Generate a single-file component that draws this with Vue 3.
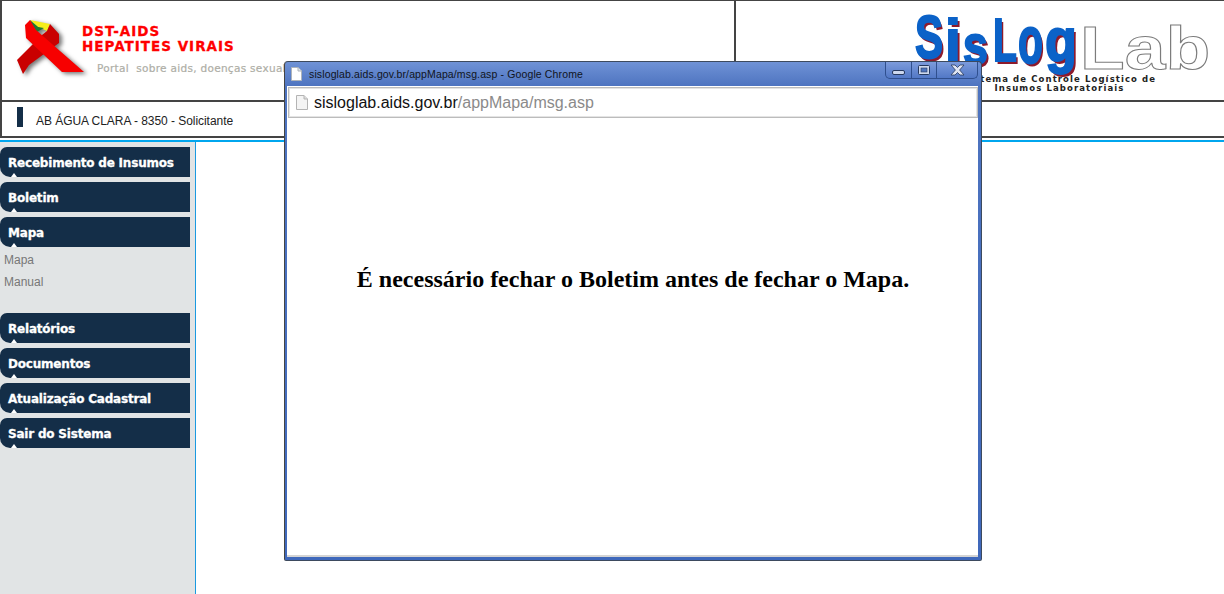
<template>
  <div class="page">
    <header class="top">
      <div class="brand">
        <svg class="ribbon" width="75" height="62" viewBox="15 18 75 62">
          <path d="M30 20 L50 24 L47 31 L38 27 Z" fill="#f6ee1a" />
          <path d="M30 20 L38 27 L44 28 L37 32 L33 30 Z" fill="#1c7a30" />
          <path d="M50 24 L59 34 L59 43 L29 65 L23 74 L17 60 L42 35 L47 31 Z" fill="#c90000" />
          <path d="M25 25 L30 20 L36 30 L84 72 L62 72 L26 38 Z" fill="#f70000" />
        </svg>
        <div class="brand-text">
          <div class="brand-title">DST-AIDS<br>HEPATITES VIRAIS</div>
          <div class="brand-sub">Portal&nbsp; sobre aids, doenças sexualmente transmissíveis</div>
        </div>
      </div>
      <div class="logo-cell">
        <div class="logo">
          <div class="logo-word">
            <span class="sis s1">S</span><span class="sis s2">i</span><span class="sis s3">s</span><span class="sis s4">L</span><span class="sis s5">o</span><span class="sis s6">g</span>
            <span class="lab">Lab</span>
          </div>
          <div class="logo-sub">Sistema de Controle Logístico de<br>Insumos Laboratoriais</div>
        </div>
      </div>
    </header>

    <div class="user-row">
      <span class="user-mark"></span>
      <span class="user-name">AB ÁGUA CLARA - 8350 - Solicitante</span>
    </div>
    <div class="blue-line"></div>

    <div class="body">
      <nav class="side">
        <template v-for="item in menu" :key="item.label">
          <div class="menu-item">{{ item.label }}</div>
          <div v-if="item.children" class="submenu">
            <div v-for="child in item.children" :key="child" class="sub-item">{{ child }}</div>
          </div>
        </template>
      </nav>
      <main class="content"></main>
    </div>

    <div class="popup">
      <div class="titlebar">
        <svg class="page-icon" width="11" height="14" viewBox="0 0 11 14">
          <path d="M.5.5H7L10.5 4V13.5H.5Z" fill="#fff" stroke="#aeb4bb" />
          <path d="M7 .5V4H10.5" fill="#e4e6e8" stroke="#aeb4bb" />
        </svg>
        <span class="title-text">sisloglab.aids.gov.br/appMapa/msg.asp - Google Chrome</span>
        <div class="controls">
          <span class="ctl ctl-min">
            <svg width="13" height="5" viewBox="0 0 13 5"><rect x=".5" y=".5" width="12" height="4" rx="1.5" fill="#cdd8ee" stroke="#26395f" /></svg>
          </span>
          <span class="ctl ctl-max">
            <svg width="12" height="10" viewBox="0 0 12 10"><rect x=".5" y=".5" width="11" height="9" rx="1" fill="#cdd8ee" stroke="#26395f" /><rect x="3" y="3" width="6" height="4" fill="#4f74bd" stroke="#26395f" stroke-width=".6" /></svg>
          </span>
          <span class="ctl ctl-close">
            <svg width="15" height="12" viewBox="0 0 15 12"><path d="M1 1H5L7.5 3.5L10 1H14L9.6 6L14 11H10L7.5 8.5L5 11H1L5.4 6Z" fill="#dfe5f2" stroke="#2a3a5c" stroke-width=".8" /></svg>
          </span>
        </div>
      </div>
      <div class="popup-inner">
        <div class="address">
          <svg width="12" height="15" viewBox="0 0 12 15">
            <path d="M.5.5H8L11.5 4V14.5H.5Z" fill="#f4f4f4" stroke="#b4b4b4" />
            <path d="M8 .5V4H11.5" fill="#ddd" stroke="#b4b4b4" />
          </svg>
          <span class="url"><b>sisloglab.aids.gov.br</b>/appMapa/msg.asp</span>
        </div>
        <div class="message">
          <h2>É necessário fechar o Boletim antes de fechar o Mapa.</h2>
        </div>
      </div>
    </div>
  </div>
</template>

<script setup>
const menu = [
  { label: 'Recebimento de Insumos' },
  { label: 'Boletim' },
  { label: 'Mapa', children: ['Mapa', 'Manual'] },
  { label: 'Relatórios' },
  { label: 'Documentos' },
  { label: 'Atualização Cadastral' },
  { label: 'Sair do Sistema' },
]
</script>

<style>
html, body {
  margin: 0;
  overflow: hidden;
}
</style>

<style scoped>
.page {
  width: 1224px;
  height: 594px;
  position: relative;
  overflow: hidden;
  background: #fff;
  font-family: "Liberation Sans", Arial, sans-serif;
  display: flex;
  flex-direction: column;
}
.top {
  height: 102px;
  flex: none;
  box-sizing: border-box;
  display: flex;
  border: 2px solid #444;
  border-width: 1px 0 2px 2px;
}
.brand {
  width: 734px;
  flex: none;
  box-sizing: border-box;
  border-right: 2px solid #444;
  display: flex;
  padding: 17px 0 0 13px;
}
.ribbon {
  flex: none;
  filter: drop-shadow(3px 2px 2px #777);
}
.brand-text {
  margin-left: -8px;
  padding-top: 6px;
}
.brand-title {
  color: #f00;
  font-family: "DejaVu Sans", sans-serif;
  font-weight: bold;
  font-size: 13.5px;
  line-height: 15px;
  letter-spacing: 1px;
  -webkit-text-stroke: .3px #f00;
  white-space: nowrap;
}
.brand-sub {
  margin: 8px 0 0 15px;
  color: #aeaea6;
  font-family: "DejaVu Sans", sans-serif;
  font-size: 10.5px;
  letter-spacing: .3px;
  -webkit-text-stroke: .2px #aeaea6;
  white-space: nowrap;
}
.logo-cell {
  flex: 1;
  display: flex;
  justify-content: flex-end;
}
.logo {
  width: 310px;
  box-sizing: border-box;
}
.logo-word {
  display: flex;
  align-items: baseline;
  height: 75px;
  padding-left: 1px;
  white-space: nowrap;
}
.sis {
  display: inline-block;
  font-weight: bold;
  color: #0b62c8;
  text-shadow: 3px 3px 0 #8d1a2c;
  -webkit-text-stroke: 2px #0b62c8;
  transform-origin: left bottom;
}
.s1 { font-size: 62px; transform: translateY(-4px) scaleX(.68); width: 30px; }
.s2 { font-size: 60px; transform: translateY(-1px) scaleX(.95); width: 18px; }
.s3 { font-size: 56px; transform: translateY(2px) scaleX(.8); width: 30px; }
.s4 { font-size: 62px; transform: translateY(-1px) scaleX(.63); width: 25px; }
.s5 { font-size: 66px; transform: translateY(1px) scaleX(.62); width: 27px; }
.s6 { font-size: 62px; transform: translateY(-1px) scaleX(.84); width: 35px; }
.lab {
  display: inline-block;
  font-size: 61px;
  line-height: 50px;
  font-weight: bold;
  color: #fff;
  -webkit-text-stroke: 1px #7c7c7c;
  transform: translateY(7px) scaleX(1.2);
  transform-origin: left bottom;
}
.logo-sub {
  margin-top: -1px;
  padding-right: 19px;
  text-align: center;
  font-family: "DejaVu Sans", sans-serif;
  font-weight: bold;
  font-size: 8.5px;
  line-height: 9px;
  letter-spacing: 1.1px;
  color: #222;
  white-space: nowrap;
}
.user-row {
  height: 36px;
  flex: none;
  box-sizing: border-box;
  border: 2px solid #444;
  border-width: 0 0 2px 2px;
  display: flex;
  align-items: flex-start;
  padding-left: 15px;
}
.user-mark {
  width: 6px;
  height: 20px;
  margin: 5px 13px 0 0;
  background: #142e48;
}
.user-name {
  margin-top: 12px;
  font-size: 12px;
  letter-spacing: -.05px;
  color: #222;
}
.blue-line {
  height: 2px;
  flex: none;
  margin-top: 2px;
  background: #00a6ee;
}
.body {
  flex: 1;
  display: flex;
  min-height: 0;
}
.side {
  width: 196px;
  box-sizing: border-box;
  background: #e1e4e5;
  border-right: 1px solid #1a9ae0;
  padding-top: 5px;
}
.menu-item {
  position: relative;
  width: 190px;
  height: 30px;
  box-sizing: border-box;
  margin-bottom: 5px;
  padding-left: 8px;
  background: #142e48;
  border-radius: 7px 0 0 10px;
  color: #fff;
  font-family: "DejaVu Sans", sans-serif;
  font-weight: bold;
  font-size: 12px;
  letter-spacing: -.2px;
  line-height: 32px;
  -webkit-text-stroke: .3px #fff;
  white-space: nowrap;
}
.menu-item::after {
  content: "";
  position: absolute;
  left: 11px;
  bottom: 0;
  border: 3px solid transparent;
  border-top: 0;
  border-bottom: 4px solid #fff;
}
.submenu {
  height: 66px;
  margin-top: -5px;
  padding-top: 2px;
  box-sizing: border-box;
}
.sub-item {
  height: 22px;
  padding-left: 4px;
  color: #777;
  font-size: 12px;
  line-height: 22px;
}
.content {
  flex: 1;
  background: #fff;
}
.popup {
  position: absolute;
  left: 284px;
  top: 61px;
  width: 698px;
  height: 500px;
  box-sizing: border-box;
  background: linear-gradient(#6f92d6, #4e74c0 24px, #3f68bb);
  border: 1px solid #3d4a5e;
  border-left-color: #444;
  border-radius: 4px 4px 2px 2px;
  display: flex;
  flex-direction: column;
  padding: 0 3px 3px 2px;
}
.titlebar {
  height: 24px;
  flex: none;
  display: flex;
  align-items: center;
  padding-left: 4px;
  position: relative;
}
.page-icon {
  margin-right: 7px;
}
.title-text {
  font-size: 10.5px;
  letter-spacing: .13px;
  color: #10141c;
}
.controls {
  position: absolute;
  right: 0;
  top: 0;
  width: 93px;
  height: 17px;
  box-sizing: border-box;
  border: 1px solid #2f4f8e;
  border-top: 0;
  border-radius: 0 0 5px 5px;
  display: flex;
  background: linear-gradient(#7c9bdc, #5278c6);
}
.ctl {
  display: flex;
  align-items: center;
  justify-content: center;
  border-right: 1px solid #2f4f8e;
}
.ctl-min { width: 25px; }
.ctl-min svg { margin-top: 5px; }
.ctl-max { width: 24px; }
.ctl-close {
  flex: 1;
  border-right: 0;
}
.popup-inner {
  flex: 1;
  min-height: 0;
  display: flex;
  flex-direction: column;
  background: #fff;
  border-bottom: 2px solid #d4d4d4;
}
.address {
  height: 31px;
  flex: none;
  box-sizing: border-box;
  margin: 1px 0 0 1px;
  border: 1px solid #bcbcbc;
  box-shadow: inset 0 0 0 1px #e4e4e4;
  display: flex;
  align-items: center;
  padding-left: 7px;
  background: #fff;
}
.url {
  margin-left: 6px;
  font-size: 16px;
  color: #8a8a8a;
  white-space: nowrap;
}
.url b {
  font-weight: normal;
  color: #111;
}
.message {
  flex: 1;
  text-align: center;
  padding-top: 148px;
}
.message h2 {
  margin: 0 0 0 1px;
  font-family: "Liberation Serif", "Times New Roman", serif;
  font-weight: bold;
  font-size: 24px;
  line-height: 26px;
  color: #000;
}
</style>
